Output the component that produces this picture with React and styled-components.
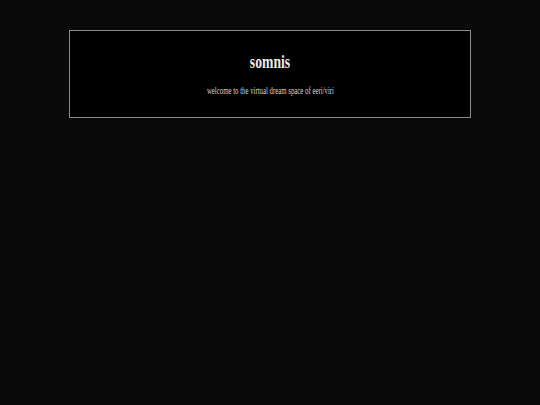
import styled, { createGlobalStyle } from 'styled-components';

const Global = createGlobalStyle`
  html, body {
    margin: 0;
    padding: 0;
    background: #0a0a0a;
    color: #e8e8e8;
    font-family: "Liberation Serif", "Times New Roman", serif;
  }
`;

const Page = styled.div`
  min-height: 405px;
  padding-top: 30px;
  box-sizing: border-box;
`;

const Header = styled.header`
  width: 402px;
  height: 88px;
  margin: 0 auto;
  box-sizing: border-box;
  background: #000;
  border: 1px solid #8a8a8a;
  display: flex;
  flex-direction: column;
  align-items: center;
  padding-top: 20px;
`;

const Title = styled.h1`
  margin: 0;
  font-size: 19px;
  font-weight: bold;
  line-height: 22px;
  color: #eeeaee;
  transform: scaleX(0.72);
`;

const Tagline = styled.p`
  margin: 12px 0 0;
  font-size: 10px;
  line-height: 12px;
  color: #d4d4d4;
  white-space: nowrap;
  transform: scaleX(0.68);
`;

export default function App() {
  return (
    <>
      <Global />
      <Page>
        <Header>
          <Title>somnis</Title>
          <Tagline>welcome to the virtual dream space of eeri/viri</Tagline>
        </Header>
      </Page>
    </>
  );
}
